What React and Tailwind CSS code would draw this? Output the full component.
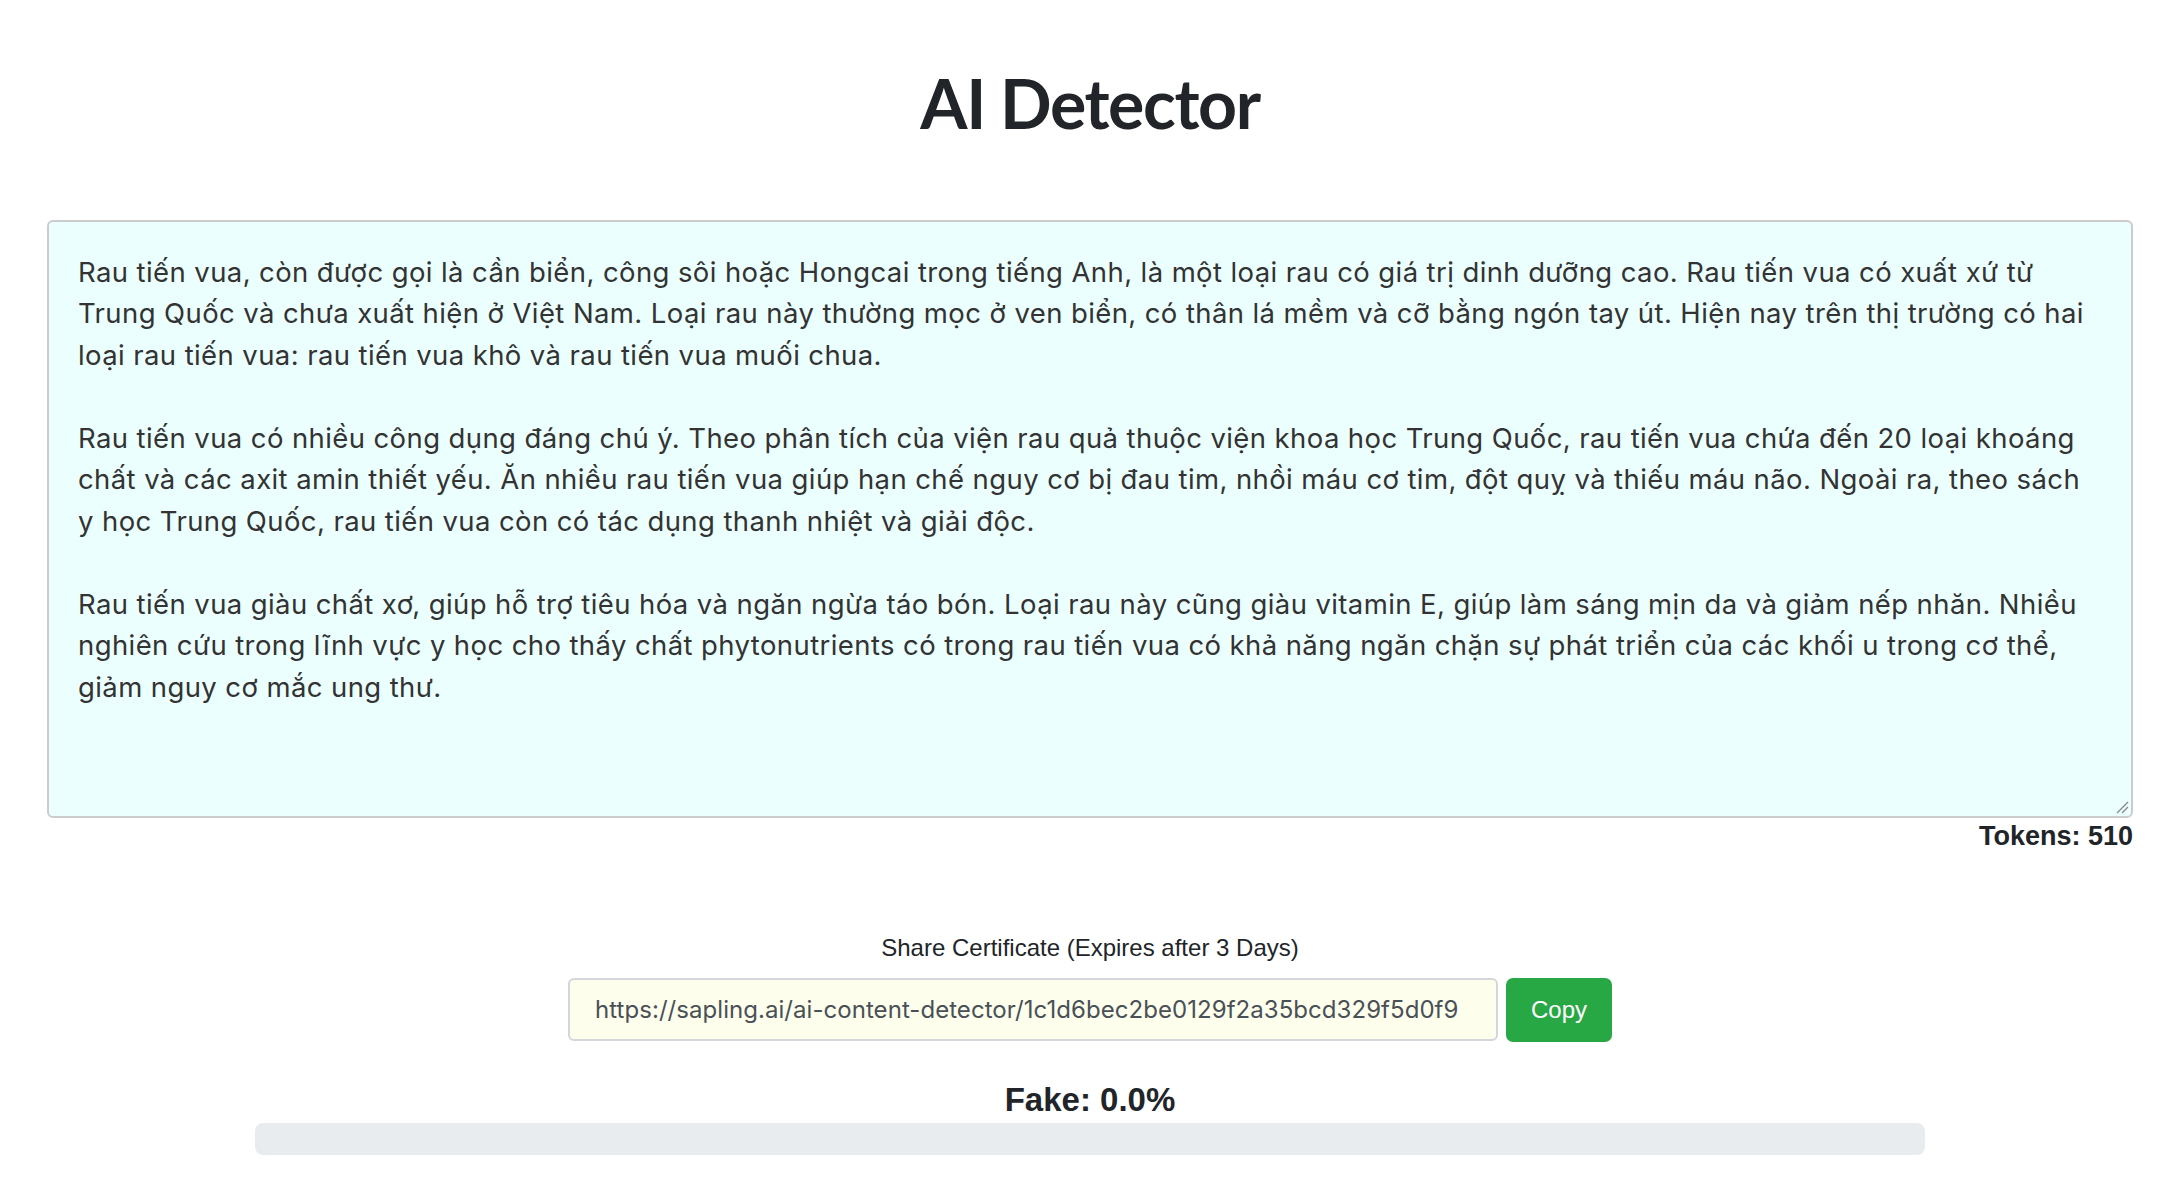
import React from "react";

const paragraphs = [
  [
    "Rau tiến vua, còn được gọi là cần biển, công sôi hoặc Hongcai trong tiếng Anh, là một loại rau có giá trị dinh dưỡng cao. Rau tiến vua có xuất xứ từ",
    "Trung Quốc và chưa xuất hiện ở Việt Nam. Loại rau này thường mọc ở ven biển, có thân lá mềm và cỡ bằng ngón tay út. Hiện nay trên thị trường có hai",
    "loại rau tiến vua: rau tiến vua khô và rau tiến vua muối chua.",
  ],
  [
    "Rau tiến vua có nhiều công dụng đáng chú ý. Theo phân tích của viện rau quả thuộc viện khoa học Trung Quốc, rau tiến vua chứa đến 20 loại khoáng",
    "chất và các axit amin thiết yếu. Ăn nhiều rau tiến vua giúp hạn chế nguy cơ bị đau tim, nhồi máu cơ tim, đột quỵ và thiếu máu não. Ngoài ra, theo sách",
    "y học Trung Quốc, rau tiến vua còn có tác dụng thanh nhiệt và giải độc.",
  ],
  [
    "Rau tiến vua giàu chất xơ, giúp hỗ trợ tiêu hóa và ngăn ngừa táo bón. Loại rau này cũng giàu vitamin E, giúp làm sáng mịn da và giảm nếp nhăn. Nhiều",
    "nghiên cứu trong lĩnh vực y học cho thấy chất phytonutrients có trong rau tiến vua có khả năng ngăn chặn sự phát triển của các khối u trong cơ thể,",
    "giảm nguy cơ mắc ung thư.",
  ],
];

export default function App() {
  return (
    <div className="min-h-[1186px] bg-white pl-[47px] pr-[37px] font-['Liberation_Sans',Arial,sans-serif] text-[#212529]">
      <h1 className="pt-[62px] text-center font-['Lato',sans-serif] text-[68px] font-bold leading-[1.2] tracking-[-1.4px] text-[#212529]">
        AI Detector
      </h1>

      <div className="relative mt-[76px] h-[598px] rounded-[6px] border-2 border-[#cccccc] bg-[#ebffff] pl-[29px] pt-[30px] font-['Inter',sans-serif] text-[27.5px] leading-[41.5px] tracking-[0.4px] text-[#333333]">
        {paragraphs.map((p, i) => (
          <div key={i} className={i > 0 ? "mt-[41.5px]" : ""}>
            {p.map((line, j) => (
              <div key={j} className="whitespace-nowrap">
                {line}
              </div>
            ))}
          </div>
        ))}
        <svg
          className="absolute bottom-[2px] right-[2px]"
          width="14"
          height="14"
          viewBox="0 0 14 14"
        >
          <line x1="2" y1="13" x2="13" y2="2" stroke="#888" strokeWidth="1.3" />
          <line x1="7" y1="13" x2="13" y2="7" stroke="#888" strokeWidth="1.3" />
        </svg>
      </div>

      <div className="mt-[3px] text-right text-[27px] font-bold leading-[31px]">
        Tokens: 510
      </div>

      <div className="mt-[82px] text-center text-[24px] leading-[27.6px] text-[#212529]">
        Share Certificate (Expires after 3 Days)
      </div>

      <div className="mt-[17px] flex justify-center gap-[8px]">
        <div className="flex h-[63px] w-[930px] items-center rounded-[6px] border-2 border-[#d3d7dc] bg-[#fefeec] pl-[25px] font-['Inter',sans-serif] text-[24px] tracking-[0.05px] text-[#495057]">
          https://sapling.ai/ai-content-detector/1c1d6bec2be0129f2a35bcd329f5d0f9
        </div>
        <button className="h-[64px] w-[106px] rounded-[7px] bg-[#28a745] text-[24px] text-white">
          Copy
        </button>
      </div>

      <div className="mt-[39px] text-center text-[33px] font-bold leading-[38px]">
        Fake: 0.0%
      </div>

      <div className="mx-auto mt-[4px] h-[32px] w-[1670px] rounded-[8px] bg-[#e9ecef]" />
    </div>
  );
}
